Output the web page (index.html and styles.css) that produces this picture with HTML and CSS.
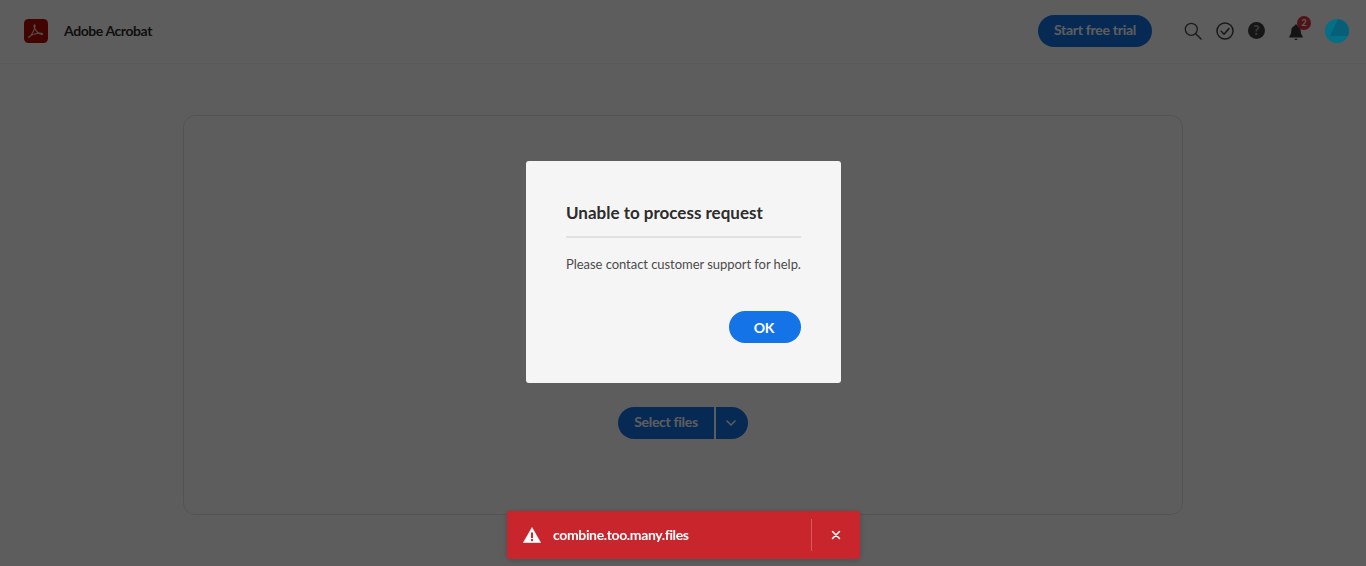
FILE: index.html
```html
<!DOCTYPE html>
<html lang="en">
<head>
<meta charset="utf-8">
<title>Adobe Acrobat</title>
<link rel="stylesheet" href="styles.css">
</head>
<body>
<header class="topbar">
  <div class="brand">
    <svg class="logo" viewBox="0 0 24 24" width="24" height="24"><rect width="24" height="24" rx="4.500" fill="#b30b00"/><path d="M4.800 18.300c1.700-1 3.300-3.300 4.800-6.500 1-2.100 1.500-3.900 1.500-5.100 0-1-.8-1.100-1-.4-.4 1 .5 3.300 2.200 5.500 1.800 2.300 4 3.600 5.500 3.600 1.100 0 1.200-.9.200-1.100-1.700-.4-5.200 0-8.200.9-2.500.8-4.400 1.900-5 2.900-.3.500 0 .6 0 .2z" fill="none" stroke="#f2c6c2" stroke-width="1.100"/></svg>
    <span class="brand-name">Adobe Acrobat</span>
  </div>
  <div class="actions">
    <button class="trial">Start free trial</button>
    <div class="icons">
      <svg class="ico" viewBox="0 0 18 18" width="18" height="18"><circle cx="7.300" cy="7.300" r="6" fill="none" stroke="#4a4a4a" stroke-width="1.300"/><path d="M11.700 11.700l5.300 5.300" stroke="#4a4a4a" stroke-width="1.500" stroke-linecap="round"/></svg>
      <svg class="ico" viewBox="0 0 18 18" width="18" height="18"><circle cx="9" cy="9" r="8" fill="none" stroke="#444" stroke-width="1.500"/><path d="M5.200 9.300l2.800 2.900 4.900-5.600" fill="none" stroke="#444" stroke-width="1.600" stroke-linecap="round" stroke-linejoin="round"/></svg>
      <span class="help">?</span>
      <span class="bell">
        <svg viewBox="0 0 18 18" width="18" height="18"><path d="M9 1.500c-.8 0-1.300.5-1.300 1.200-2.200.6-3.400 2.400-3.400 4.800 0 3-.8 4.600-2.100 5.900v1h13.600v-1c-1.300-1.300-2.100-2.900-2.100-5.900 0-2.400-1.200-4.200-3.400-4.800 0-.7-.5-1.200-1.300-1.200z" fill="#383838"/><path d="M7.300 15.800h3.400c-.2.800-.9 1.300-1.700 1.300s-1.500-.5-1.700-1.300z" fill="#383838"/></svg>
        <span class="badge">2</span>
      </span>
      <svg class="avatar" viewBox="0 0 24 24" width="24" height="24"><circle cx="12" cy="12" r="12" fill="#066f88"/><path d="M13 .04L5 17H22.800A12 12 0 0 0 13 .04z" fill="#075f77"/></svg>
    </div>
  </div>
</header>
<main class="stage">
  <section class="dropzone">
    <div class="split">
      <button class="split-main">Select files</button>
      <button class="split-arrow" aria-label="More"><svg viewBox="0 0 10 6" width="10" height="6"><path d="M1 1l4 4 4-4" fill="none" stroke="#fff" stroke-width="1.500" stroke-linecap="round" stroke-linejoin="round"/></svg></button>
    </div>
  </section>
</main>
<div class="scrim"></div>
<div class="dialog" role="dialog">
  <h2 class="dialog-title">Unable to process request</h2>
  <p class="dialog-text">Please contact customer support for help.</p>
  <div class="dialog-foot"><button class="ok">OK</button></div>
</div>
<div class="toast" role="alert">
  <svg class="toast-icon" viewBox="0 0 18 16" width="18" height="16"><path d="M9 .4L.2 15.800h17.600z" fill="#fff" stroke="#fff" stroke-width=".4" stroke-linejoin="round"/><rect x="8" y="5.500" width="2" height="5.500" fill="#c9252d"/><circle cx="9" cy="13" r="1.200" fill="#c9252d"/></svg>
  <span class="toast-text">combine.too.many.files</span>
  <span class="toast-close"><svg viewBox="0 0 10 10" width="10" height="10"><path d="M1.500 1.500l7 7m0-7l-7 7" stroke="#fff" stroke-width="1.500" stroke-linecap="round"/></svg></span>
</div>
</body>
</html>
```
FILE: styles.css
```css
* { box-sizing: border-box; }
html, body { height: 100%; }
body {
  margin: 0;
  background: #fff;
  font-family: Lato, "Noto Sans", sans-serif;
  overflow: hidden;
}
button { font-family: inherit; border: 0; cursor: pointer; }
.topbar {
  height: 64px;
  border-bottom: 1px solid #f4f4f4;
  display: flex;
  align-items: center;
  justify-content: space-between;
  padding: 0 17px 2px 24px;
}
.brand { display: flex; align-items: center; gap: 16px; }
.logo { display: block; }
.brand-name { font-size: 14px; font-weight: 700; color: #2c2c2c; letter-spacing: -.42px; }
.actions { display: flex; align-items: center; }
.trial {
  width: 114px;
  height: 32px;
  border-radius: 16px;
  background: #1473e6;
  color: #fff;
  font-size: 14px;
  font-weight: 700;
  letter-spacing: -.28px;
  padding: 0 0 2px;
}
.icons { display: flex; align-items: center; margin-left: 32px; }
.ico { display: block; margin-right: 14px; }
.help {
  width: 17px; height: 17px; border-radius: 50%;
  background: #3c3c3c; color: #a0a0a0;
  font-size: 13px; font-weight: 900; line-height: 17px; text-align: center;
  margin-right: 22px;
}
.bell { position: relative; display: block; width: 18px; height: 18px; margin-right: 20px; margin-top: 2px; }
.bell svg { display: block; }
.badge {
  position: absolute; left: 10px; top: -7px;
  width: 14px; height: 14px; border-radius: 50%;
  background: #d7373f; color: #fff;
  font-size: 9px; font-weight: 700; line-height: 14px; text-align: center;
}
.avatar { display: block; position: relative; z-index: 1; }
.stage { display: flex; justify-content: center; padding-top: 51px; }
.dropzone {
  width: 1000px;
  height: 400px;
  border: 1px solid #e4e4e4;
  border-radius: 12px;
  display: flex;
  justify-content: center;
  padding-top: 291px;
}
.split { display: flex; height: 32px; gap: 2px; }
.split-main {
  width: 96px; height: 32px;
  background: #1473e6; color: #fff;
  border-radius: 16px 0 0 16px;
  font-size: 14px; font-weight: 700; letter-spacing: -.3px;
  padding: 0 0 3px;
}
.split-arrow {
  width: 32px; height: 32px;
  background: #1473e6;
  border-radius: 0 16px 16px 0;
  display: flex; align-items: center; justify-content: center;
  padding: 0 2px 0 0;
}
.scrim { position: fixed; inset: 0; background: rgba(0, 0, 0, .635); }
.dialog {
  position: fixed;
  left: 526px; top: 161px;
  width: 315px; height: 222px;
  background: #f5f5f5;
  border-radius: 3px;
  padding: 40px;
}
.dialog-title {
  margin: 0;
  height: 37px;
  border-bottom: 2px solid #e1e1e1;
  font-size: 17px; line-height: 24px; font-weight: 700; color: #2c2c2c;
}
.dialog-text { margin: 16px 0 0; font-size: 13px; letter-spacing: -.05px; line-height: 20px; color: #4b4b4b; white-space: nowrap; }
.dialog-foot { display: flex; justify-content: flex-end; margin-top: 37px; }
.ok {
  width: 72px; height: 32px; border-radius: 16px;
  background: #1473e6; color: #fff;
  font-size: 14px; font-weight: 700; letter-spacing: -.2px; padding: 0 2px 0 0;
}
.toast {
  position: fixed;
  left: 507px; top: 511px;
  width: 353px; height: 48px;
  background: #c9252d;
  border-radius: 3px;
  box-shadow: 0 1px 6px rgba(0, 0, 0, .2);
  display: flex; align-items: center;
  padding-left: 16px;
  color: #fff;
}
.toast-icon { display: block; flex: none; }
.toast-text { margin-left: 12px; font-size: 14px; font-weight: 700; letter-spacing: -.36px; flex: 1; padding-bottom: 2px; }
.toast-close {
  width: 49px; height: 32px;
  border-left: 1px solid rgba(255, 255, 255, .25);
  display: flex; align-items: center; justify-content: center;
}
.toast-close svg { display: block; }
```
